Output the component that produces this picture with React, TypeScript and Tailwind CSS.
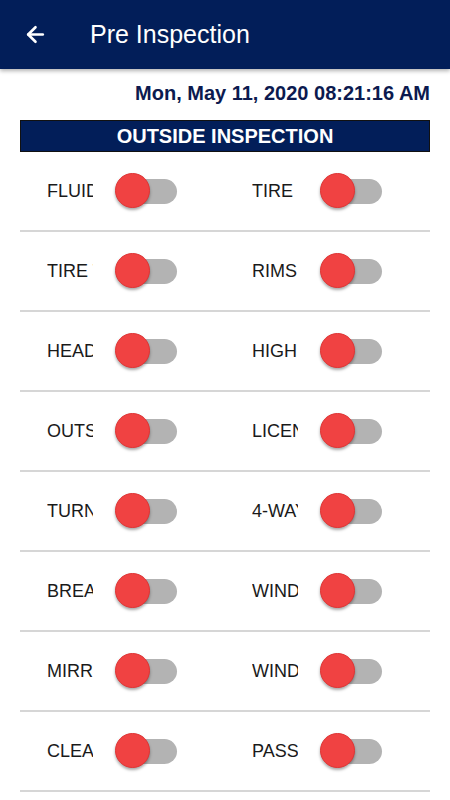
import { ArrowLeft } from 'lucide-react'

const rows: [string, string][] = [
  ['FLUID LEVELS', 'TIRE PRESSURE'],
  ['TIRE TREAD', 'RIMS'],
  ['HEADLIGHTS', 'HIGH BEAMS'],
  ['OUTSIDE LIGHTS', 'LICENSE PLATE'],
  ['TURN SIGNALS', '4-WAY FLASHERS'],
  ['BREAK LIGHTS', 'WINDSHIELD'],
  ['MIRRORS', 'WINDSHIELD WIPERS'],
  ['CLEAN', 'PASSENGER DOOR'],
]

function Toggle() {
  return (
    <div className="relative w-[64px] h-[36px] shrink-0">
      <div className="absolute left-[8px] right-[2px] top-[6px] h-[25px] rounded-full bg-[#b3b3b3]" />
      <div className="absolute left-0 top-0 w-[35px] h-[35px] rounded-full bg-[#f04242] border border-[#e03434] shadow-[0_2px_3px_rgba(0,0,0,0.35)]" />
    </div>
  )
}

function Cell({ label }: { label: string }) {
  return (
    <div className="flex items-center pl-[27px]">
      <span className="w-[46px] overflow-hidden whitespace-nowrap text-[18px] text-[#1a1a1a]">{label}</span>
      <div className="ml-[22px]">
        <Toggle />
      </div>
    </div>
  )
}

export default function App() {
  return (
    <div className="w-[450px] h-[800px] bg-white overflow-hidden" style={{ fontFamily: '"Liberation Sans", Arial, sans-serif' }}>
      <header className="h-[69px] bg-[#021e59] flex items-center shadow-[0_2px_4px_rgba(0,0,0,0.3)] relative z-10">
        <ArrowLeft className="ml-[23px] w-[25px] h-[25px] text-white" strokeWidth={2.5} />
        <h1 className="ml-[42px] text-white text-[25px]">Pre Inspection</h1>
      </header>

      <div className="px-5">
        <div className="pt-[12px] text-right text-[20px] font-bold text-[#0c1a4f] leading-[24px]">
          Mon, May 11, 2020 08:21:16 AM
        </div>

        <div className="mt-[15px] h-[32px] bg-[#021e59] border border-[#111] flex items-center justify-center text-white font-bold text-[20px]">
          OUTSIDE INSPECTION
        </div>

        {rows.map(([a, b], i) => (
          <div key={i} className="grid grid-cols-2 h-[80px] border-b-2 border-[#d6d6d6]">
            <Cell label={a} />
            <Cell label={b} />
          </div>
        ))}
      </div>
    </div>
  )
}
